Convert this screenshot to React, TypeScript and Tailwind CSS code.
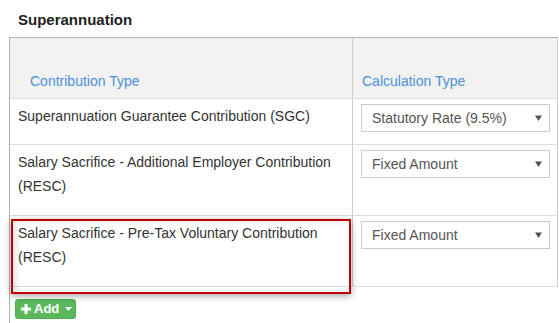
import React from 'react'

const rows = [
  { name: 'Superannuation Guarantee Contribution (SGC)', calc: 'Statutory Rate (9.5%)', h: 'h-[46px]' },
  { name: 'Salary Sacrifice - Additional Employer Contribution (RESC)', calc: 'Fixed Amount', h: 'h-[71px]' },
  { name: 'Salary Sacrifice - Pre-Tax Voluntary Contribution (RESC)', calc: 'Fixed Amount', h: 'h-[71px]' },
]

function SelectBox({ value }: { value: string }) {
  return (
    <div className="flex items-center justify-between h-[28px] w-[189px] border border-[#cccccc] bg-white pl-[10px] pr-[7px] text-[14px] text-[#555555]">
      <span>{value}</span>
      <svg width="7" height="6" viewBox="0 0 7 6">
        <path d="M0 0.5 L7 0.5 L3.5 6 Z" fill="#555" />
      </svg>
    </div>
  )
}

export default function App() {
  return (
    <div
      className="relative w-[559px] h-[323px] bg-white overflow-hidden text-[#333333]"
      style={{ fontFamily: '"Liberation Sans", Arial, sans-serif' }}
    >
      <div className="h-[37px] pl-[18px] pt-[11px] text-[15px] font-bold leading-[18px] text-[#222222]">
        Superannuation
      </div>

      <div className="ml-[9px] w-[549px] h-[286px] border-l border-[#b0b0b0]">
        <div className="border-t border-r border-t-[#b0b0b0] border-r-[#cccccc]">
          {/* header */}
          <div className="grid grid-cols-[342px_1fr] h-[61px] bg-[#f2f2f2] border-b border-[#dddddd] text-[14px] text-[#4a90d9]">
            <div className="pl-[20px] pt-[31px] leading-[24px]">Contribution Type</div>
            <div className="border-l border-[#cccccc] pl-[9px] pt-[31px] leading-[24px]">Calculation Type</div>
          </div>

          {rows.map((r) => (
            <div key={r.name} className={`grid grid-cols-[342px_1fr] border-b border-[#dddddd] ${r.h}`}>
              <div className="pl-[8px] pr-[20px] pt-[5px] text-[14px] leading-[24px]">{r.name}</div>
              <div className="border-l border-[#cccccc] pl-[8px] pt-[5px]">
                <SelectBox value={r.calc} />
              </div>
            </div>
          ))}
        </div>

        <div className="ml-[5px] mt-[12px] flex items-center h-[20px] w-[61px] rounded-[3px] bg-[#5cb85c] border border-[#4cae4c] pl-[5px] text-[13px] font-bold text-white">
          <svg width="10" height="10" viewBox="0 0 10 10">
            <path d="M3.5 0 H6.5 V3.5 H10 V6.5 H6.5 V10 H3.5 V6.5 H0 V3.5 H3.5 Z" fill="#fff" />
          </svg>
          <span className="ml-[3px]">Add</span>
          <svg width="7" height="4" viewBox="0 0 7 4" className="ml-[6px]">
            <path d="M0 0 L7 0 L3.5 4 Z" fill="#fff" />
          </svg>
        </div>
      </div>

      {/* annotation highlight */}
      <div className="absolute left-[11px] top-[219px] w-[340px] h-[75px] border-2 border-[#c00000] shadow-[0_2px_7px_rgba(0,0,0,0.35),inset_3px_0_6px_rgba(0,0,0,0.12)]" />
    </div>
  )
}
